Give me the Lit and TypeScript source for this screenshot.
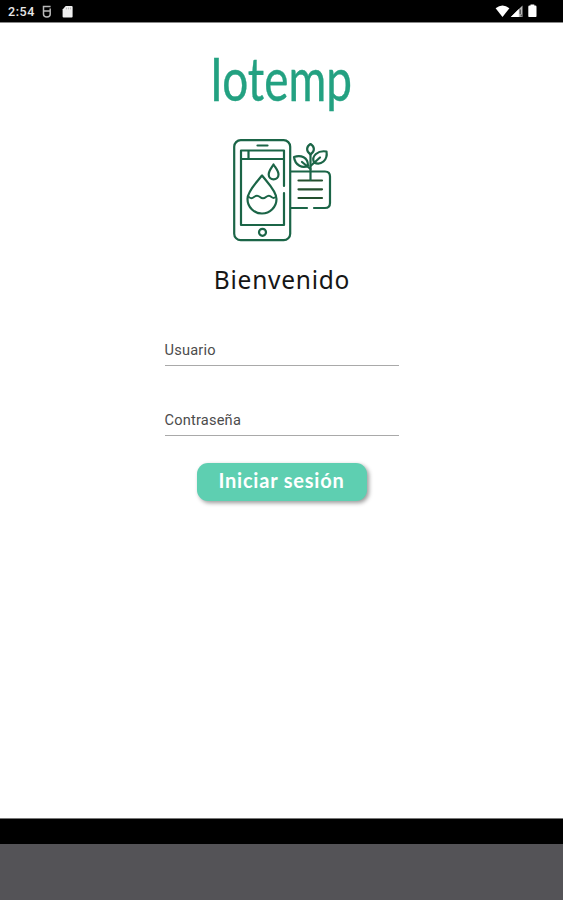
import { LitElement, html, css } from "lit";
import { customElement, property } from "lit/decorators.js";

@customElement("status-bar")
class StatusBar extends LitElement {
  static styles = css`
    :host {
      display: flex;
      align-items: center;
      height: 22px;
      box-sizing: border-box;
      padding: 1px 24px 0 8px;
      background: #000;
      color: #e8e8e8;
      font: 500 12.5px/20px Roboto, sans-serif;
      letter-spacing: 0.6px;
    }
    .time { width: 34px; }
    .card { margin-left: -6px; }
    .right { margin-left: auto; }
    svg { display: block; }
  `;
  render() {
    return html`
      <span class="time">2:54</span>
      <svg viewBox="0 0 26 22" width="26" height="22" fill="none">
        <path d="M8.600 5.500H1.500V9.900H8.200V13.200Q8.200 15.700 4.900 15.900Q1.500 15.700 1.500 13.200V9.900M8.200 9.900V7.500" stroke="#b9b9b9" stroke-width="1.500" />
      </svg>
      <svg class="card" width="12" height="22" viewBox="0 0 12 22">
        <path d="M3.700 5H9.600Q10.600 5 10.600 6V15.600Q10.600 16.600 9.600 16.600H1.600Q.6 16.600 .6 15.600V8.400Z" fill="#f0f0f0" />
        <path d="M4.400 6.500V8.400M6.400 6.500V8.400M8.400 6.500V8.400" stroke="#aaa" stroke-width=".8" />
      </svg>
      <svg class="right" viewBox="0 0 44 22" width="44" height="22">
        <path d="M.6 7.300Q7.500 1.800 14.400 7.300L7.500 16Z" fill="#fff" />
        <path d="M27.500 4.600V15.900H15.800Z" fill="#b8b8b8" />
        <path d="M23.800 8V15.900H15.800Z" fill="#fff" />
        <path d="M25.200 8.500V13M26.200 13.600V15.400" stroke="#222" stroke-width=".9" />
        <path d="M35.500 4.600V3.400H39.300V4.600H40.300Q41.500 4.600 41.500 5.800V14.900Q41.500 16.100 40.300 16.100H34.500Q33.300 16.100 33.300 14.900V5.800Q33.300 4.600 34.500 4.600Z" fill="#fff" />
      </svg>
    `;
  }
}

@customElement("line-field")
class LineField extends LitElement {
  @property() label = "";
  static styles = css`
    :host {
      display: block;
      width: 234px;
      height: 26px;
      box-sizing: border-box;
      border-bottom: 1px solid #a9a9a9;
      font: 400 14.6px/21px Roboto, sans-serif;
      letter-spacing: 0.2px;
      color: #4c4c4c;
    }
  `;
  render() {
    return html`${this.label}`;
  }
}

@customElement("app-root")
class AppRoot extends LitElement {
  static styles = css`
    :host {
      display: flex;
      flex-direction: column;
      width: 563px;
      height: 900px;
      background: #fff;
    }
    main {
      flex: 1;
      display: flex;
      flex-direction: column;
      align-items: center;
      border-top: 1px solid #888;
      border-bottom: 1px solid #777;
    }
    .brand {
      display: block;
      width: 150px;
      height: 92px;
      margin-top: 14px;
      overflow: visible;
    }
    .brand text {
      font-family: Lato, sans-serif;
      font-size: 60px;
      fill: #23a181;
      stroke: #23a181;
      stroke-width: 0.4;
    }
    .picture { display: block; margin-top: 8px; }
    h1 {
      margin: 19px 0 0;
      font: 400 24.5px/36px "Noto Sans", sans-serif;
      letter-spacing: 0.75px;
      text-indent: 1px;
      color: #161616;
    }
    .user { margin-top: 42px; }
    .pass { margin-top: 44px; }
    button {
      width: 170px;
      height: 38px;
      margin-top: 27px;
      padding: 0 0 4px;
      border: 0;
      border-radius: 11px;
      background: #5ecfb1;
      box-shadow: 2px 2px 4px rgba(0, 0, 0, 0.4);
      color: #fff;
      font: 700 20px/34px Lato, sans-serif;
      letter-spacing: 0.8px;
      white-space: nowrap;
    }
    .nav { height: 25px; background: #000; }
    .dock { height: 56px; background: #545357; }
  `;
  render() {
    return html`
      <status-bar></status-bar>
      <main>
        <svg class="brand" viewBox="0 0 150 92">
          <text x="3" y="64" textLength="142" lengthAdjust="spacingAndGlyphs">Iotemp</text>
        </svg>
        <svg class="picture" width="100" height="106" viewBox="0 0 100 106" fill="none" stroke="#1b6547" stroke-width="2.2" stroke-linecap="round" stroke-linejoin="round">
          <rect x="2.200" y="3.200" width="56" height="100" rx="6.500" />
          <path d="M25.500 8.500H35.500" />
          <path d="M52 49V13.500H9V88H52V56" />
          <path d="M9 22H51M16.500 14V21" />
          <circle cx="30.500" cy="95.300" r="3.500" />
          <path d="M30 38.500C25 45 15.500 54 15.500 62A14.300 14.300 0 0 0 44.500 62C44.500 54 35 45 30 38.500Z" />
          <path d="M16.500 59.500Q19 62.500 22 60Q25 57.500 28 60Q31 62.500 34 60Q37 57.500 39.500 60Q42 62 44 59.500" stroke-width="1.900" />
          <path d="M41.500 27.500C39 31.500 36.700 34 36.700 37.500A4.900 4.900 0 0 0 46.500 37.500C46.500 34 44 31.500 41.500 27.500Z" />
          <path d="M59 34.500H93Q98 34.500 98 39.500V66Q98 71 93 71H82M75 71H59" />
          <path d="M66.500 43.500H90M66.500 52.300H90M66.500 61H90" stroke="#244f2d" />
          <path d="M78.500 43V17" />
          <path d="M78.500 17.500C73.500 14 74.500 9.500 78.500 7C82.500 9.500 83.500 14 78.500 17.500Z" />
          <path d="M76 28.500C71 32 63 28.500 62 20C69 17.500 76 20.500 76 28.500ZM70 25L78.500 32" />
          <path d="M82 25.500C79 19 86 13 94.500 14.500C96 23 89 29 82 25.500ZM78.500 29L88 20.500" />
        </svg>
        <h1>Bienvenido</h1>
        <line-field class="user" label="Usuario"></line-field>
        <line-field class="pass" label="Contraseña"></line-field>
        <button>Iniciar sesión</button>
      </main>
      <div class="nav"></div>
      <div class="dock"></div>
    `;
  }
}
